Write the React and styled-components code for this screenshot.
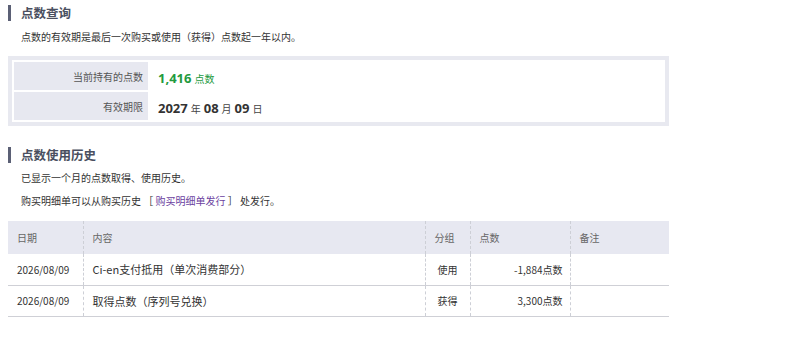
import * as React from "react";
import styled, { createGlobalStyle } from "styled-components";

const historyRows = [
  { date: "2026/08/09", content: "Ci-en支付抵用（单次消费部分）", group: "使用", points: "-1,884点数", note: "" },
  { date: "2026/08/09", content: "取得点数（序列号兑换）", group: "获得", points: "3,300点数", note: "" },
];

const GlobalStyle = createGlobalStyle`
  body {
    margin: 0;
    background: #fff;
    font-family: "Noto Sans CJK SC", "Noto Sans", sans-serif;
    color: #333;
  }
`;

function App() {
  return (
    <Page>
      <GlobalStyle />
      <Heading>点数查询</Heading>
      <Note $top={9}>点数的有效期是最后一次购买或使用（获得）点数起一年以内。</Note>
      <BalanceBox>
        <BalanceTable>
          <tbody>
            <tr>
              <LabelCell>当前持有的点数</LabelCell>
              <ValueCell>
                <Points>1,416</Points>
                <PointsUnit>点数</PointsUnit>
              </ValueCell>
            </tr>
            <tr>
              <LabelCell>有效期限</LabelCell>
              <ValueCell>
                <DateNum>2027</DateNum>
                <DateUnit>年</DateUnit>
                <DateNum>08</DateNum>
                <DateUnit>月</DateUnit>
                <DateNum>09</DateNum>
                <DateUnit>日</DateUnit>
              </ValueCell>
            </tr>
          </tbody>
        </BalanceTable>
      </BalanceBox>

      <Heading $top={21}>点数使用历史</Heading>
      <Note $top={8}>已显示一个月的点数取得、使用历史。</Note>
      <Note $top={9}>
        购买明细单可以从购买历史 ［ <Link>购买明细单发行</Link> ］ 处发行。
      </Note>

      <HistoryTable>
        <colgroup>
          <col style={{ width: 75 }} />
          <col />
          <col style={{ width: 45 }} />
          <col style={{ width: 100 }} />
          <col style={{ width: 99 }} />
        </colgroup>
        <thead>
          <tr>
            <Th>日期</Th>
            <Th>内容</Th>
            <Th>分组</Th>
            <Th>点数</Th>
            <Th>备注</Th>
          </tr>
        </thead>
        <tbody>
          {historyRows.map((row, i) => (
            <tr key={i}>
              <Td>{row.date}</Td>
              <Td $big>{row.content}</Td>
              <Td $align="center">{row.group}</Td>
              <Td $align="right">{row.points}</Td>
              <Td>{row.note}</Td>
            </tr>
          ))}
        </tbody>
      </HistoryTable>
    </Page>
  );
}

const Page = styled.div`
  width: 661px;
  padding: 5px 8px 20px;
`;

const Heading = styled.h2`
  margin: ${(p) => p.$top || 0}px 0 0;
  border-left: 3px solid #5b6075;
  padding-left: 10px;
  height: 16px;
  line-height: 16px;
  font-size: 12.5px;
  font-weight: bold;
  color: #4a4f60;
`;

const Note = styled.p`
  margin: ${(p) => p.$top || 0}px 0 0 13px;
  font-size: 10px;
  line-height: 14px;
  color: #333;
`;

const Link = styled.span`
  color: #6b3fa0;
`;

const BalanceBox = styled.div`
  margin-top: 12px;
  border: 4px solid #e8e9f0;
  background: #fff;
`;

const BalanceTable = styled.table`
  width: 100%;
  border-collapse: separate;
  border-spacing: 2px;
`;

const LabelCell = styled.th`
  width: 129px;
  height: 28px;
  padding: 0 5px 0 0;
  background: #e7e8f0;
  text-align: right;
  font-size: 10px;
  font-weight: normal;
  color: #555;
`;

const ValueCell = styled.td`
  padding: 0 0 0 8px;
  background: #fff;
  white-space: nowrap;
`;

const Points = styled.span`
  font-family: "Open Sans", "Noto Sans", sans-serif;
  font-size: 13px;
  font-weight: bold;
  color: #239a3e;
`;

const PointsUnit = styled.span`
  margin-left: 3px;
  font-size: 10px;
  color: #239a3e;
`;

const DateNum = styled.span`
  font-family: "Open Sans", "Noto Sans", sans-serif;
  font-size: 13px;
  font-weight: bold;
  color: #333;
`;

const DateUnit = styled.span`
  margin: 0 3px;
  font-size: 10px;
  color: #444;
`;

const HistoryTable = styled.table`
  margin-top: 13px;
  width: 100%;
  table-layout: fixed;
  border-collapse: collapse;
  font-size: 10px;
`;

const Th = styled.th`
  box-sizing: border-box;
  height: 33px;
  padding: 0 9px;
  background: #e7e8f1;
  text-align: left;
  font-weight: normal;
  color: #666;
  border-left: 1px dashed #cdcfd6;
  &:first-child {
    border-left: none;
  }
`;

const Td = styled.td`
  box-sizing: border-box;
  height: 31px;
  padding: 0 ${(p) => (p.$align === "right" ? 7 : 9)}px 0 9px;
  text-align: ${(p) => p.$align || "left"};
  font-size: ${(p) => (p.$big ? 11 : 10)}px;
  color: #333;
  white-space: nowrap;
  border-bottom: 1px solid #cfd0d6;
  border-left: 1px dashed #cdcfd6;
  &:first-child {
    border-left: none;
  }
`;

export default App;
